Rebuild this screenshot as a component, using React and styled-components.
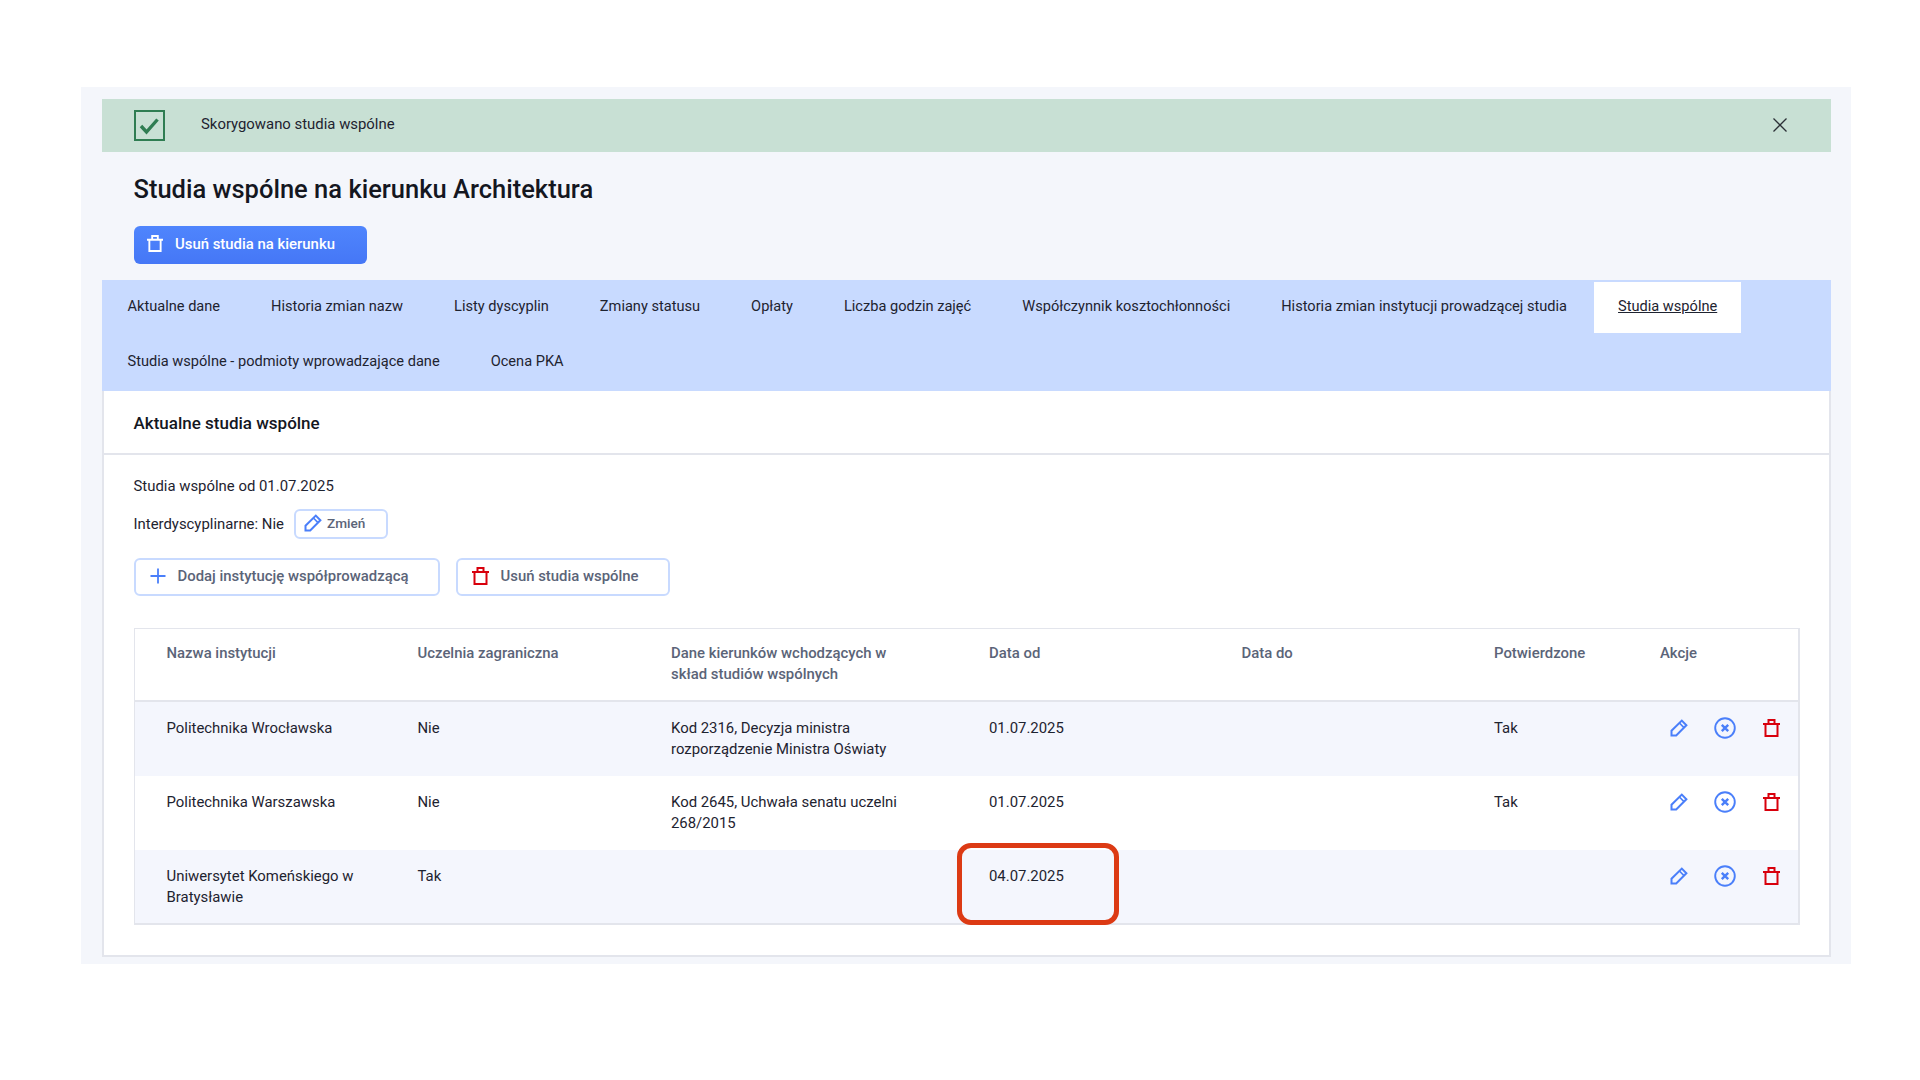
import React from 'react';
import styled, { createGlobalStyle } from 'styled-components';

const GlobalStyle = createGlobalStyle`
  html, body {
    margin: 0;
    padding: 0;
    background: #ffffff;
  }
  body {
    font-family: Roboto, "Liberation Sans", sans-serif;
    font-size: 14.9px;
    color: #1e2330;
  }
  * {
    box-sizing: border-box;
  }
`;

const Page = styled.div`
  width: 1770px;
  margin: 87px 0 0 81px;
  padding: 12px 20px 7px 21px;
  background: #f4f6fb;
`;

const Banner = styled.div`
  height: 53px;
  display: flex;
  align-items: center;
  padding: 0 43px 0 32px;
  background: #c8e0d4;
`;

const BannerText = styled.span`
  flex: 1;
  margin-left: 36px;
  margin-top: -3px;
`;

const CloseSlot = styled.span`
  display: flex;
  margin-top: -2px;
`;

const Title = styled.h1`
  margin: 20.5px 0 21px 31.5px;
  font-size: 25.5px;
  line-height: 32px;
  font-weight: 500;
  color: #14171f;
`;

const PrimaryButton = styled.button`
  display: flex;
  align-items: center;
  gap: 12px;
  width: 233px;
  height: 38px;
  margin: 0 0 16px 32px;
  padding: 0 0 2px 13px;
  border: none;
  border-radius: 6px;
  background: linear-gradient(#4f85fd, #4577f6);
  color: #ffffff;
  font: 500 14.9px Roboto, sans-serif;
`;

const Tabs = styled.nav`
  display: flex;
  flex-wrap: wrap;
  padding-bottom: 1px;
  background: #c8daff;
  font-size: 14.6px;
`;

const Tab = styled.a`
  display: flex;
  align-items: center;
  height: 51px;
  margin: 2px 1.5px;
  padding: 0 24px 1.5px;
  background: ${(p) => (p.$active ? '#ffffff' : 'transparent')};
  text-decoration: ${(p) => (p.$active ? 'underline' : 'none')};
  color: #1e2330;
`;

const Panel = styled.section`
  padding-bottom: 30px;
  background: #ffffff;
  border: 2px solid #e3e5ec;
  border-top: none;
`;

const PanelHeader = styled.h2`
  height: 64px;
  margin: 0;
  padding: 2px 0 0 29.5px;
  display: flex;
  align-items: center;
  font-size: 17px;
  font-weight: 500;
  color: #14171f;
  border-bottom: 2px solid #e3e5ec;
`;

const PanelBody = styled.div`
  padding: 21px 29.5px 0;
`;

const InfoLine = styled.div`
  height: 21px;
  line-height: 21px;
`;

const InterRow = styled.div`
  display: flex;
  align-items: center;
  gap: 10px;
  margin-top: 12px;
`;

const OutlineButton = styled.button`
  display: flex;
  align-items: center;
  height: ${(p) => (p.$small ? '30.5px' : '38px')};
  width: ${(p) => p.$width}px;
  gap: ${(p) => (p.$small ? '5px' : '12px')};
  padding: 0 0 2px ${(p) => (p.$small ? '8px' : '14px')};
  border: 2px solid #c8daff;
  border-radius: 6px;
  background: #ffffff;
  color: #5b6478;
  font: 500 ${(p) => (p.$small ? '13.6px' : '14.9px')} Roboto, sans-serif;
`;

const ButtonRow = styled.div`
  display: flex;
  gap: 16px;
  margin-top: 19px;
  margin-bottom: 32px;
`;

const Table = styled.div`
  width: 1666px;
  border: 2px solid #e3e5ec;
  border-width: 1px 2px 2px 1px;
`;

const Row = styled.div`
  display: grid;
  grid-template-columns: 251px 253.5px 318px 252.5px 252.5px 166px 1fr;
  height: ${(p) => (p.$head ? '73px' : '74px')};
  background: ${(p) => (p.$shaded ? '#f4f6fd' : '#ffffff')};
  border-bottom: ${(p) => (p.$head ? '2px solid #e3e5ec' : 'none')};
  color: ${(p) => (p.$head ? '#5b6478' : '#1e2330')};
  font-weight: ${(p) => (p.$head ? 500 : 400)};

  &:last-child {
    height: 73px;
  }
`;

const Cell = styled.div`
  position: relative;
  padding: ${(p) => (p.$head ? '14px' : '16px')} ${(p) => (p.$wrap ? '60px' : '32px')} 0 32px;
  line-height: 21px;
`;

const Highlight = styled.div`
  position: absolute;
  top: -7px;
  left: 0;
  width: 162px;
  height: 82px;
  border: 5.5px solid #dc3a14;
  border-radius: 14px;
`;

const Actions = styled.div`
  display: flex;
  align-items: center;
  height: 24px;
  padding-left: 28px;
  margin-top: 14px;
`;

const ActionSlot = styled.span`
  display: flex;
  justify-content: center;
  width: 46px;
`;

const CheckBox = () => (
  <svg width="31" height="31" viewBox="0 0 31 31" fill="none">
    <rect x="1" y="1" width="29" height="29" stroke="#2f7d52" strokeWidth="2" />
    <path d="M7 16l5.5 6L23.5 9.5" stroke="#2f7d52" strokeWidth="3.4" />
  </svg>
);

const CloseIcon = () => (
  <svg width="16" height="16" viewBox="0 0 16 16" fill="none">
    <path d="M1.5 1.5l13 13M14.5 1.5l-13 13" stroke="#2b2f36" strokeWidth="1.3" />
  </svg>
);

const TrashIcon = ({ color, size = 18 }) => (
  <svg width={size} height={size * 1.06} viewBox="0 0 17 18" fill="none" stroke={color} strokeWidth="2">
    <path d="M0 5h17M2.5 5v12h12V5M5.5 5V1h6v4" />
  </svg>
);

const PencilIcon = ({ size = 18 }) => (
  <svg width={size} height={size} viewBox="0 0 18 18" fill="none" stroke="#4a7ffa" strokeWidth="2">
    <path d="M1.5 16.5v-4.8L11.8 1.6l4.6 4.6L6.2 16.5z" />
    <path d="M9.4 4l4.6 4.6" strokeWidth="1.6" />
  </svg>
);

const CancelIcon = () => (
  <svg width="22" height="22" viewBox="0 0 22 22" fill="none" stroke="#4a7ffa">
    <circle cx="11" cy="11" r="9.8" strokeWidth="1.9" />
    <path d="M7.8 7.8l6.4 6.4M14.2 7.8l-6.4 6.4" strokeWidth="2.4" />
  </svg>
);

const PlusIcon = () => (
  <svg width="16" height="16" viewBox="0 0 16 16" fill="none" stroke="#4a7ffa" strokeWidth="1.8">
    <path d="M8 0.5v15M0.5 8h15" />
  </svg>
);

const tabs = [
  'Aktualne dane',
  'Historia zmian nazw',
  'Listy dyscyplin',
  'Zmiany statusu',
  'Opłaty',
  'Liczba godzin zajęć',
  'Współczynnik kosztochłonności',
  'Historia zmian instytucji prowadzącej studia',
  'Studia wspólne',
  'Studia wspólne - podmioty wprowadzające dane',
  'Ocena PKA',
];

const rows = [
  {
    name: 'Politechnika Wrocławska',
    foreign: 'Nie',
    details: 'Kod 2316, Decyzja ministra rozporządzenie Ministra Oświaty',
    from: '01.07.2025',
    confirmed: 'Tak',
  },
  {
    name: 'Politechnika Warszawska',
    foreign: 'Nie',
    details: 'Kod 2645, Uchwała senatu uczelni 268/2015',
    from: '01.07.2025',
    confirmed: 'Tak',
  },
  {
    name: 'Uniwersytet Komeńskiego w Bratysławie',
    foreign: 'Tak',
    details: '',
    from: '04.07.2025',
    confirmed: '',
    marked: true,
  },
];

export default function App() {
  return (
    <>
      <GlobalStyle />
      <Page>
        <Banner>
          <CheckBox />
          <BannerText>Skorygowano studia wspólne</BannerText>
          <CloseSlot>
            <CloseIcon />
          </CloseSlot>
        </Banner>

        <Title>Studia wspólne na kierunku Architektura</Title>

        <PrimaryButton>
          <TrashIcon color="#ffffff" size={16} />
          Usuń studia na kierunku
        </PrimaryButton>

        <Tabs>
          {tabs.map((tab) => (
            <Tab key={tab} $active={tab === 'Studia wspólne'}>
              {tab}
            </Tab>
          ))}
        </Tabs>

        <Panel>
          <PanelHeader>Aktualne studia wspólne</PanelHeader>
          <PanelBody>
            <InfoLine>Studia wspólne od 01.07.2025</InfoLine>
            <InterRow>
              <span>Interdyscyplinarne: Nie</span>
              <OutlineButton $small $width={94}>
                <PencilIcon />
                Zmień
              </OutlineButton>
            </InterRow>
            <ButtonRow>
              <OutlineButton $width={306}>
                <PlusIcon />
                Dodaj instytucję współprowadzącą
              </OutlineButton>
              <OutlineButton $width={214}>
                <TrashIcon color="#d8000c" size={17} />
                Usuń studia wspólne
              </OutlineButton>
            </ButtonRow>

            <Table>
              <Row $head>
                <Cell $head>Nazwa instytucji</Cell>
                <Cell $head>Uczelnia zagraniczna</Cell>
                <Cell $head $wrap>Dane kierunków wchodzących w skład studiów wspólnych</Cell>
                <Cell $head>Data od</Cell>
                <Cell $head>Data do</Cell>
                <Cell $head>Potwierdzone</Cell>
                <Cell $head>Akcje</Cell>
              </Row>
              {rows.map((row, i) => (
                <Row key={row.name} $shaded={i % 2 === 0}>
                  <Cell>{row.name}</Cell>
                  <Cell>{row.foreign}</Cell>
                  <Cell $wrap>{row.details}</Cell>
                  <Cell>
                    {row.from}
                    {row.marked && <Highlight />}
                  </Cell>
                  <Cell />
                  <Cell>{row.confirmed}</Cell>
                  <div>
                    <Actions>
                      <ActionSlot>
                        <PencilIcon />
                      </ActionSlot>
                      <ActionSlot>
                        <CancelIcon />
                      </ActionSlot>
                      <ActionSlot>
                        <TrashIcon color="#d8000c" size={17} />
                      </ActionSlot>
                    </Actions>
                  </div>
                </Row>
              ))}
            </Table>
          </PanelBody>
        </Panel>
      </Page>
    </>
  );
}
